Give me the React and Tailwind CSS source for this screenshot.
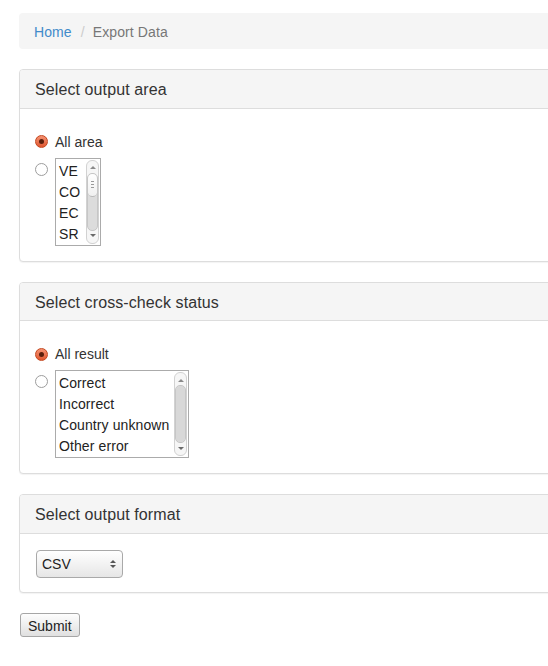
const font = { fontFamily: '"Liberation Sans", Arial, sans-serif' };

function Radio({ checked }) {
  if (checked) {
    return (
      <span className="flex h-[13px] w-[13px] shrink-0 items-center justify-center rounded-full border border-[#c4471f] bg-gradient-to-b from-[#f59272] to-[#e0562e]">
        <span className="h-[5px] w-[5px] rounded-full bg-[#5b1f0c]" />
      </span>
    );
  }
  return <span className="block h-[13px] w-[13px] shrink-0 rounded-full border border-[#9d9d9d] bg-white" />;
}

function Arrow({ up }) {
  return up ? (
    <span className="block h-0 w-0 border-x-[3px] border-b-[3px] border-x-transparent border-b-[#8a8a8a]" />
  ) : (
    <span className="block h-0 w-0 border-x-[3px] border-t-[3px] border-x-transparent border-t-[#6a6a6a]" />
  );
}

function Scrollbar({ full }) {
  return (
    <div className="flex w-[13px] flex-col items-center rounded-[6px] border border-[#d2d2d2] bg-[#f6f6f6] py-[4px]">
      <div className="flex h-[6px] items-center"><Arrow up /></div>
      <div className="mt-[2px] flex w-[11px] flex-1 flex-col rounded-[5px] border border-[#c6c6c6] bg-[#dcdcdc]">
        {full ? (
          <div className="flex-1 rounded-[5px] bg-[#d8d8d8]" />
        ) : (
          <div className="flex h-[23px] flex-col items-center justify-center gap-[2px] rounded-[5px] border-b border-[#b8b8b8] bg-gradient-to-b from-white to-[#f0f0f0]">
            <span className="block h-px w-[3px] bg-[#9a9a9a]" />
            <span className="block h-px w-[3px] bg-[#9a9a9a]" />
            <span className="block h-px w-[3px] bg-[#9a9a9a]" />
          </div>
        )}
      </div>
      <div className="mt-[2px] flex h-[6px] items-center"><Arrow /></div>
    </div>
  );
}

function ListBox({ items, width, full }) {
  return (
    <div className={`flex h-[88px] ${width} border border-[#ababab] bg-white`}>
      <div className="flex-1 overflow-hidden py-[2px] pl-[3px]">
        {items.map((it) => (
          <div key={it} className="h-[21px] whitespace-nowrap text-[14px] leading-[21px] tracking-[0.1px] text-[#222]">{it}</div>
        ))}
      </div>
      <div className="flex py-px pr-px">
        <Scrollbar full={full} />
      </div>
    </div>
  );
}

function Panel({ title, children, bodyClass }) {
  return (
    <div className="mb-5 rounded-[4px] border border-[#dddddd] bg-white shadow-[0_1px_1px_rgba(0,0,0,0.05)]">
      <div className="rounded-t-[3px] border-b border-[#dddddd] bg-[#f5f5f5] px-[15px] pt-[11px] pb-[9px]">
        <h3 className="text-[16px] leading-[17.6px] tracking-[0.1px] text-[#333]">{title}</h3>
      </div>
      <div className={bodyClass}>{children}</div>
    </div>
  );
}

function Choice({ allLabel, items, width, full }) {
  return (
    <div>
      <label className="flex h-5 items-center gap-[7px] text-[14px] text-[#333]">
        <Radio checked />
        <span className="pt-px">{allLabel}</span>
      </label>
      <div className="mt-[6px] flex items-start gap-[7px]">
        <div className="pt-[5px]"><Radio /></div>
        <ListBox items={items} width={width} full={full} />
      </div>
    </div>
  );
}

export default function App() {
  return (
    <div className="min-h-screen overflow-hidden bg-white" style={font}>
      <div className="w-[640px] pl-[19px] pt-[13px]">
        <ol className="mb-5 flex h-9 items-center rounded-[4px] bg-[#f5f5f5] px-[15px] pt-[2px] text-[14px] tracking-[0.1px]">
          <li><a className="text-[#428bca]">Home</a></li>
          <li className="ml-[4px] px-[5px] text-[#cccccc]">/</li>
          <li className="ml-[3px] text-[#777]">Export Data</li>
        </ol>

        <Panel title="Select output area" bodyClass="px-[15px] pt-[23px] pb-[15px]">
          <Choice allLabel="All area" items={["VE", "CO", "EC", "SR"]} width="w-[46px]" />
        </Panel>

        <Panel title="Select cross-check status" bodyClass="px-[15px] pt-[23px] pb-[15px]">
          <Choice allLabel="All result" items={["Correct", "Incorrect", "Country unknown", "Other error"]} width="w-[134px]" full />
        </Panel>

        <Panel title="Select output format" bodyClass="px-[16px] pt-[16px] pb-[14px]">
          <div className="flex h-[28px] w-[87px] items-center justify-between rounded-[4px] border border-[#a9a9a9] bg-gradient-to-b from-white to-[#e6e6e6] pl-[5px] pr-[6px] text-[14px] text-[#222]">
            <span className="pt-px">CSV</span>
            <span className="flex flex-col gap-[2px]">
              <span className="block h-0 w-0 border-x-[3px] border-b-[3px] border-x-transparent border-b-[#555]" />
              <span className="block h-0 w-0 border-x-[3px] border-t-[3px] border-x-transparent border-t-[#555]" />
            </span>
          </div>
        </Panel>

        <button className="ml-px mt-[3px] flex h-[24px] items-center rounded-[3px] border border-[#a6a6a6] bg-gradient-to-b from-[#fdfdfd] to-[#e0e0e0] px-[7px] pt-[3px] text-[14px] text-[#222]">
          Submit
        </button>
      </div>
    </div>
  );
}
